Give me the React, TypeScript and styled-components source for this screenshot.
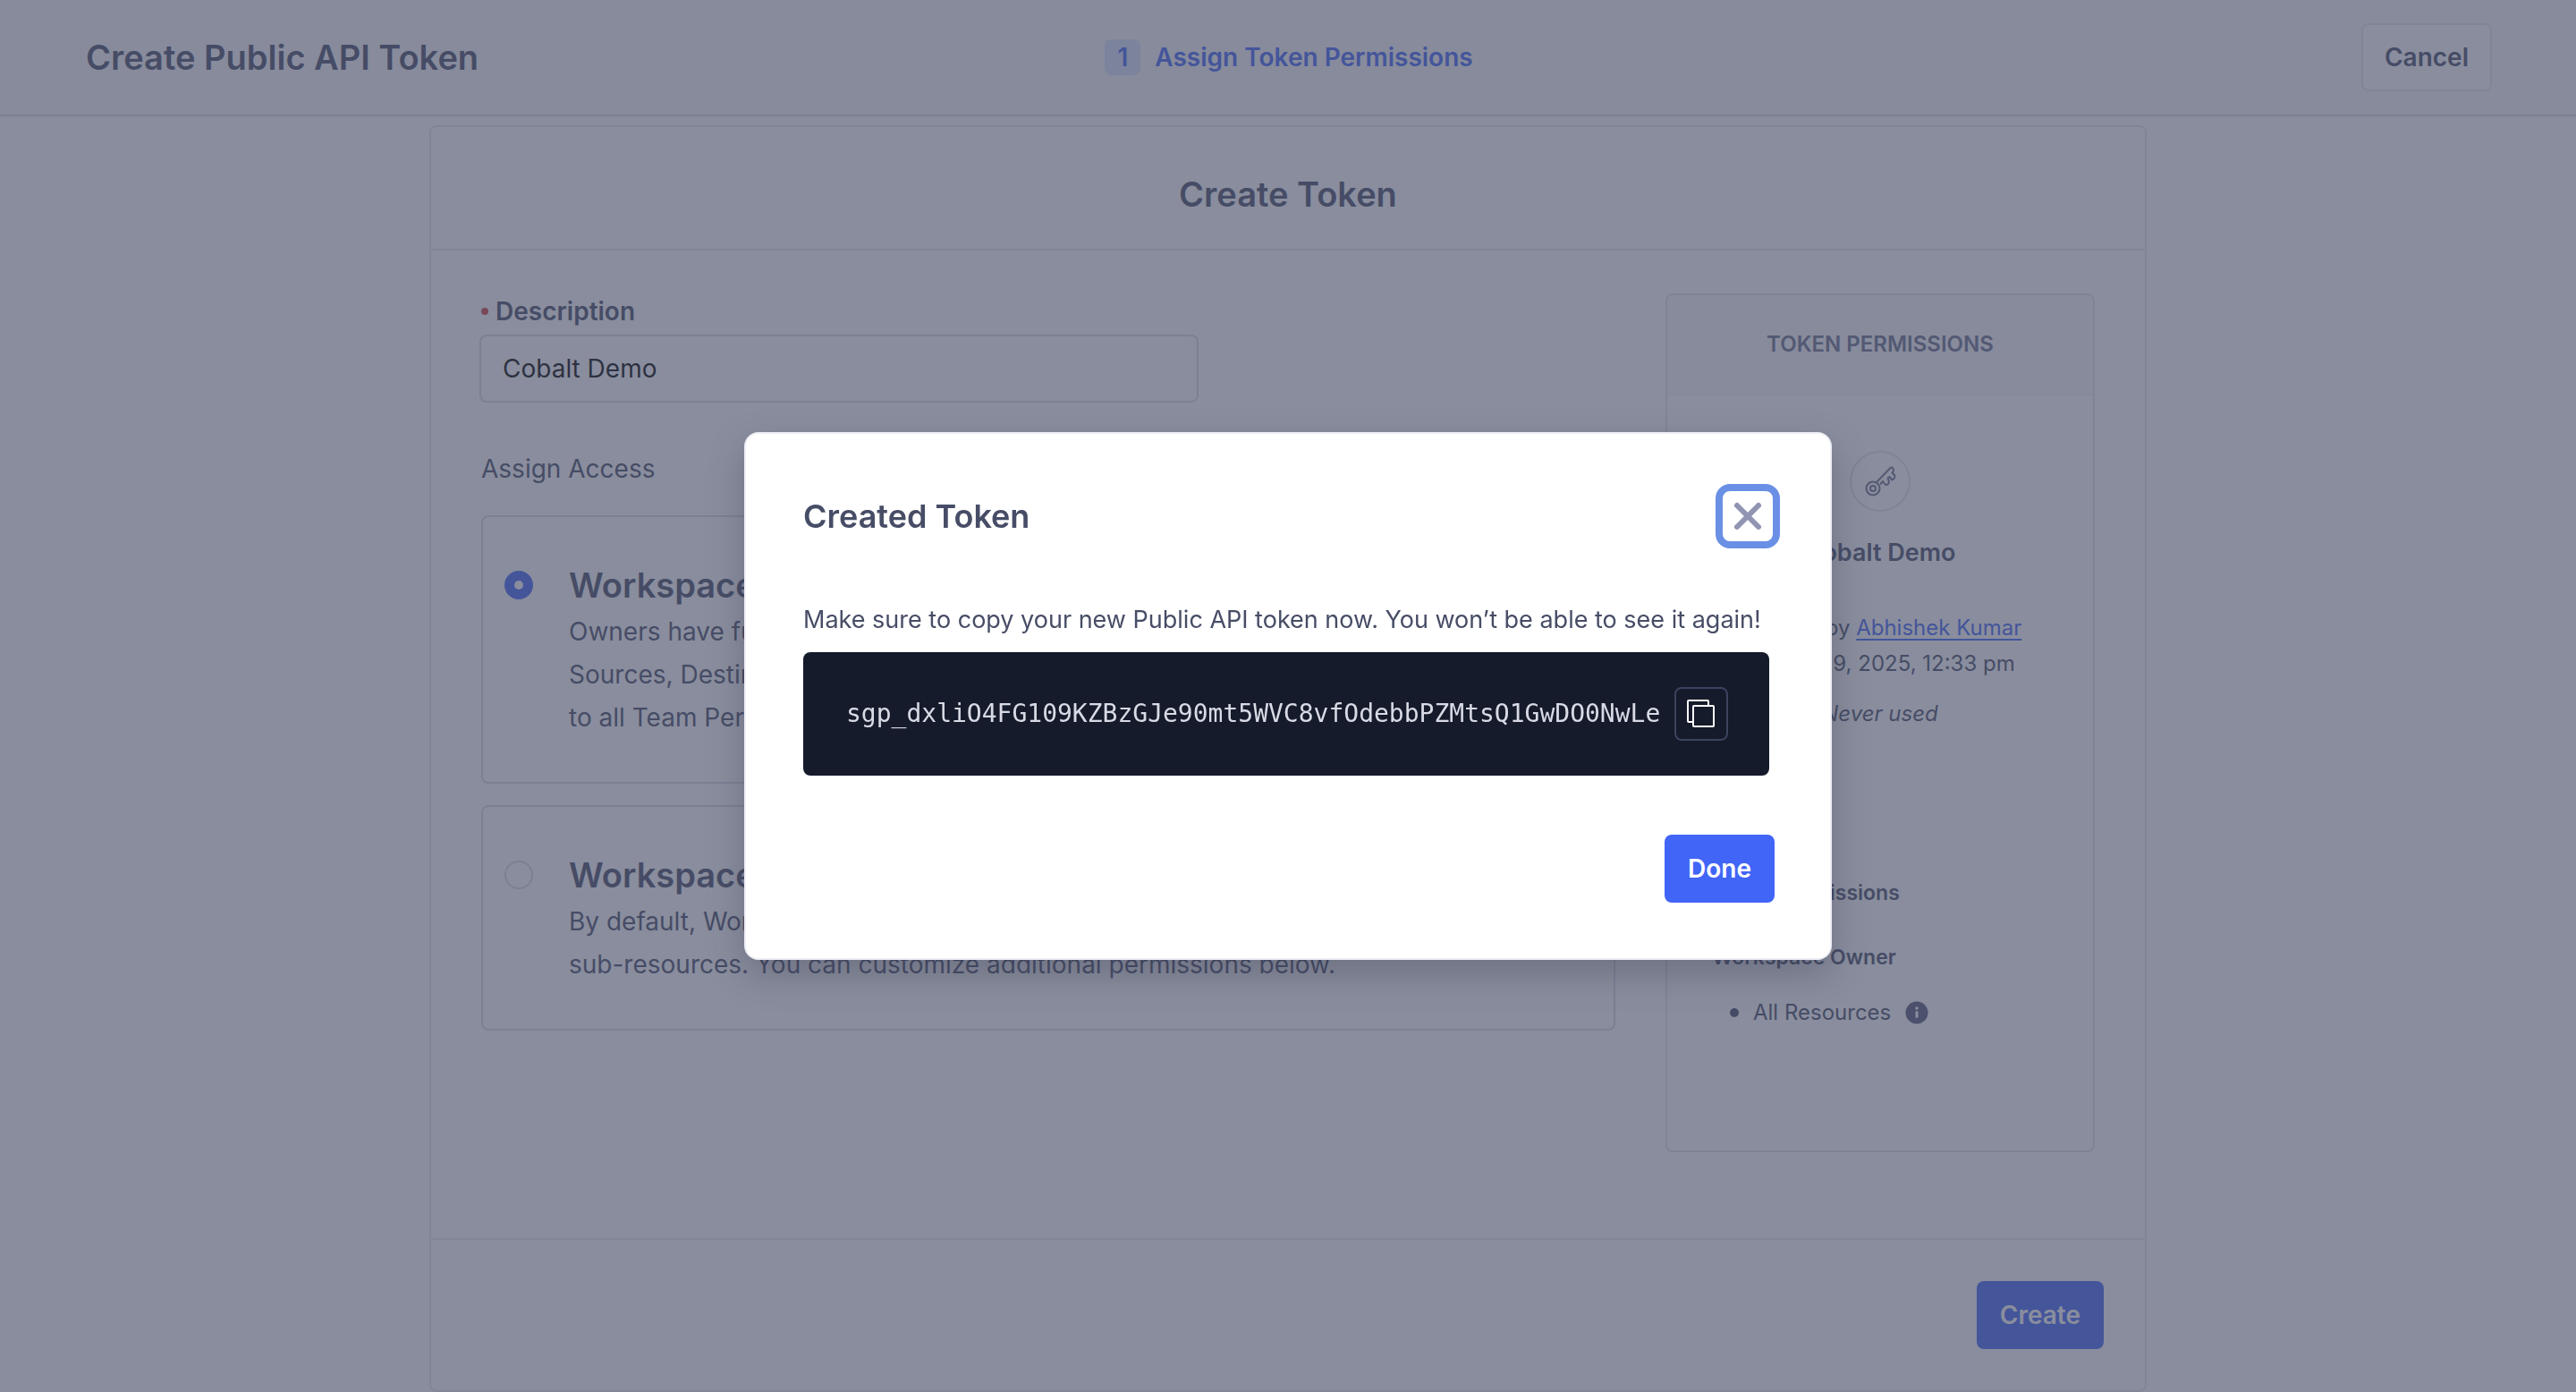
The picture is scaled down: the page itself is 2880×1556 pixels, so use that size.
import React from "react";
import styled, { createGlobalStyle } from "styled-components";

const sans = `Inter, "Liberation Sans", sans-serif`;
const mono = `"DejaVu Sans Mono", "Liberation Mono", monospace`;

const GlobalStyle = createGlobalStyle`
  *, *::before, *::after { box-sizing: border-box; }
  html, body { margin: 0; height: 100%; overflow: hidden; }
  body {
    background: #ffffff;
    color: #474d66;
    font-family: ${sans};
    font-size: 28px;
    line-height: 40px;
  }
  h1, h2, h3, h4, p, ul, dl { margin: 0; padding: 0; }
  button, input { font-family: inherit; }
`;

const Page = styled.div`
  min-height: 100vh;
`;

const TopBar = styled.header`
  display: grid;
  grid-template-columns: 1fr auto 1fr;
  align-items: center;
  height: 130px;
  padding: 0 94px 0 96px;
  background: #f9f9fd;
  border-bottom: 2px solid #d8dae5;
`;

const Heading = styled.h2<{ $compact?: boolean }>`
  font-size: ${(p) => (p.$compact ? 36 : 38)}px;
  line-height: 48px;
  font-weight: 600;
`;

const Steps = styled.nav`
  display: flex;
  align-items: center;
  gap: 16px;
  color: #4165f6;
  font-weight: 600;
`;

const StepNumber = styled.span`
  display: grid;
  place-items: center;
  width: 40px;
  height: 40px;
  border-radius: 8px;
  background: #dae2fd;
`;

const Button = styled.button<{ $primary?: boolean }>`
  height: 76px;
  padding: 0 ${(p) => (p.$primary ? 26 : 24)}px;
  border: ${(p) => (p.$primary ? "0" : "2px solid #e6e8f0")};
  border-radius: 8px;
  background: ${(p) => (p.$primary ? "#4165f6" : "#ffffff")};
  color: ${(p) => (p.$primary ? "#ffffff" : "#474d66")};
  font-size: 28px;
  font-weight: 600;
`;

const CancelSlot = styled.div`
  justify-self: end;
`;

const Card = styled.main`
  width: 1920px;
  max-width: calc(100% - 96px);
  margin: 10px auto 0;
  border: 2px solid #e6e8f0;
  border-radius: 8px;
`;

const CardHeader = styled.header`
  display: grid;
  place-items: center;
  height: 138px;
  padding-top: 14px;
  border-bottom: 2px solid #e6e8f0;
`;

const CardBody = styled.div`
  display: grid;
  grid-template-columns: minmax(0, 1fr) 480px;
  gap: 56px;
  padding: 48px 56px 96px 54px;
`;

const CardFooter = styled.footer`
  display: flex;
  justify-content: flex-end;
  padding: 46px;
  border-top: 2px solid #e6e8f0;
`;

const Form = styled.form`
  display: flex;
  flex-direction: column;
  align-items: flex-start;
`;

const FieldLabel = styled.label`
  display: flex;
  align-items: center;
  gap: 8px;
  padding-left: 2px;
  font-weight: 600;
`;

const Required = styled.span`
  width: 8px;
  height: 8px;
  border-radius: 50%;
  background: #d14343;
`;

const TextInput = styled.input`
  width: 804px;
  max-width: 100%;
  height: 76px;
  margin-top: 6px;
  padding: 0 24px;
  border: 2px solid #d8dae5;
  border-radius: 8px;
  background: #ffffff;
  color: #000000;
  font-size: 28px;
`;

const Roles = styled.fieldset`
  display: flex;
  flex-direction: column;
  gap: 24px;
  width: 100%;
  margin: 54px 0 0;
  padding: 0 0 0 2px;
  border: 0;
`;

const RolesLegend = styled.legend`
  padding: 0;
  margin-bottom: 32px;
`;

const RoleCard = styled.label`
  display: grid;
  grid-template-columns: 32px minmax(0, 1fr);
  gap: 40px;
  padding: 48px 24px;
  border: 2px solid #d8dae5;
  border-radius: 8px;
`;

const Radio = styled.input`
  appearance: none;
  width: 32px;
  height: 32px;
  margin: 12px 0 0;
  border: 2px solid #d8dae5;
  border-radius: 50%;
  background: #ffffff;

  &:checked {
    border: 11px solid #4165f6;
  }
`;

const RoleText = styled.span`
  display: block;
  font-size: 28px;
  line-height: 48px;
`;

const RoleName = styled.strong`
  display: block;
  font-size: 38px;
  font-weight: 600;
  line-height: 56px;
`;

const Summary = styled.aside`
  height: 960px;
  border: 2px solid #e0e2ec;
  border-radius: 8px;
  font-size: 24px;
`;

const SummaryTitle = styled.h3`
  display: grid;
  place-items: center;
  height: 112px;
  background: #f9f9fd;
  border-bottom: 2px solid #f4f5f9;
  border-radius: 6px 6px 0 0;
  color: #696f8c;
  font-size: 24px;
  font-weight: 600;
`;

const SummaryHead = styled.div`
  display: flex;
  flex-direction: column;
  align-items: center;
  padding-top: 62px;
  text-align: center;
`;

const KeyBadge = styled.span`
  display: grid;
  place-items: center;
  width: 68px;
  height: 68px;
  border: 2px solid #e0e2ec;
  border-radius: 50%;
  color: #696f8c;
`;

const TokenName = styled.h4`
  margin: 26px 0 44px;
  font-size: 27px;
  font-weight: 600;
`;

const Author = styled.a`
  color: #4165f6;
  text-decoration: underline;
  text-decoration-thickness: 2px;
  text-underline-offset: 4px;
`;

const LastUsed = styled.em`
  margin-top: 16px;
`;

const SummaryBody = styled.div`
  padding: 160px 50px 0;
`;

const SummaryLabel = styled.h4`
  margin-bottom: 22px;
  font-size: 23px;
  font-weight: 600;

  & + & {
    margin-top: 32px;
  }
`;

const ResourceList = styled.ul`
  list-style: none;
`;

const ResourceItem = styled.li`
  display: flex;
  align-items: center;
  gap: 16px;
  padding-left: 20px;
`;

const Bullet = styled.span`
  width: 10px;
  height: 10px;
  border-radius: 50%;
  background: #474d66;
`;

const Overlay = styled.div`
  position: fixed;
  inset: 0;
  display: grid;
  justify-items: center;
  align-items: start;
  padding-top: 483px;
  background: rgba(71, 77, 102, 0.64);
`;

const Dialog = styled.section`
  width: 1216px;
  padding: 56px 62px 62px 64px;
  border: 2px solid #edeff5;
  border-radius: 16px;
  background: #ffffff;
  box-shadow: 0 16px 40px rgba(46, 49, 68, 0.3);
`;

const DialogHeader = styled.header`
  display: flex;
  align-items: center;
  justify-content: space-between;
  margin-bottom: 60px;
`;

const DialogText = styled.p`
  font-size: 27px;
`;

const CloseButton = styled.button`
  display: grid;
  place-items: center;
  width: 72px;
  height: 72px;
  margin-right: -6px;
  padding: 0;
  border: 8px solid #6a90e6;
  border-radius: 16px;
  background: #ffffff;
  color: #8f95b2;
`;

const TokenBox = styled.div`
  display: flex;
  align-items: center;
  justify-content: space-between;
  height: 138px;
  margin: 16px 6px 66px 0;
  padding: 0 46px 0 48px;
  border-radius: 8px;
  background: #151b2b;
  color: #d8dae5;
`;

const Code = styled.code`
  font-family: ${mono};
  font-size: 28px;
`;

const CopyButton = styled.button`
  display: grid;
  place-items: center;
  width: 60px;
  height: 60px;
  padding: 0;
  border: 2px solid #3b435e;
  border-radius: 8px;
  background: transparent;
  color: #ffffff;
`;

const DialogFooter = styled.footer`
  display: flex;
  justify-content: flex-end;
`;

const KeyIcon = () => (
  <svg width="36" height="36" viewBox="0 0 36 36" fill="none" stroke="currentColor" strokeWidth="2" strokeLinejoin="round" aria-hidden="true">
    <path d="M14 19 L29 3.500 Q31 1.500 32.500 3.500 L33 6.500 L31.500 8.500 L34 11 Q35 13 33.500 15 L31.500 16.500 L28.500 13 L26.500 14.500 L28 18 Q28 20 26.500 21.500 L24 22 L21 18 L18 21.500" />
    <circle cx="10" cy="26" r="7.500" />
    <circle cx="10" cy="26" r="3" />
  </svg>
);

const CrossIcon = () => (
  <svg width="36" height="36" viewBox="0 0 36 36" fill="none" stroke="currentColor" strokeWidth="6" strokeLinecap="round" aria-hidden="true">
    <path d="M6 6 L30 30 M30 6 L6 30" />
  </svg>
);

const CopyIcon = () => (
  <svg width="32" height="32" viewBox="0 0 32 32" fill="none" stroke="currentColor" strokeWidth="2" strokeLinejoin="round" aria-hidden="true">
    <path d="M7 25 H2 Q1 25 1 24 V2 Q1 1 2 1 H23 Q24 1 24 2 V7" />
    <rect x="7" y="7" width="23" height="23" rx="1" />
  </svg>
);

const InfoIcon = () => (
  <svg width="26" height="26" viewBox="0 0 26 26" role="img" aria-label="Info">
    <circle cx="13" cy="13" r="12.500" fill="#53597a" />
    <circle cx="13" cy="8" r="1.700" fill="#fff" />
    <rect x="11.500" y="11" width="3" height="8" rx="1.500" fill="#fff" />
  </svg>
);

const roles = [
  {
    id: "owner",
    name: "Workspace Owner",
    text: ["Owners have full read and edit access to everything in the workspace, including", "Sources, Destinations, add-on products, and settings. Owners have full access", "to all Team Permissions."],
  },
  {
    id: "member",
    name: "Workspace Member",
    text: ["By default, Workspace Members do not have access to any resources or", "sub-resources. You can customize additional permissions below."],
  },
];

export default function App() {
  return (
    <>
      <GlobalStyle />
      <Page>
        <TopBar>
          <Heading as="h1">Create Public API Token</Heading>
          <Steps aria-label="Steps">
            <StepNumber>1</StepNumber>
            <span>Assign Token Permissions</span>
          </Steps>
          <CancelSlot>
            <Button type="button">Cancel</Button>
          </CancelSlot>
        </TopBar>

        <Card>
          <CardHeader>
            <Heading>Create Token</Heading>
          </CardHeader>
          <CardBody>
            <Form>
              <FieldLabel htmlFor="description">
                <Required />
                Description
              </FieldLabel>
              <TextInput id="description" type="text" defaultValue="Cobalt Demo" />
              <Roles>
                <RolesLegend>Assign Access</RolesLegend>
                {roles.map((role, index) => (
                  <RoleCard key={role.id} htmlFor={role.id}>
                    <Radio type="radio" name="role" id={role.id} defaultChecked={index === 0} />
                    <RoleText>
                      <RoleName>{role.name}</RoleName>
                      {role.text.map((line) => (
                        <React.Fragment key={line}>
                          {line}
                          <br />
                        </React.Fragment>
                      ))}
                    </RoleText>
                  </RoleCard>
                ))}
              </Roles>
            </Form>

            <Summary>
              <SummaryTitle>TOKEN PERMISSIONS</SummaryTitle>
              <SummaryHead>
                <KeyBadge>
                  <KeyIcon />
                </KeyBadge>
                <TokenName>Cobalt Demo</TokenName>
                <p>
                  Created by <Author href="#author">Abhishek Kumar</Author>
                </p>
                <p>on Jan 29, 2025, 12:33 pm</p>
                <LastUsed>Never used</LastUsed>
              </SummaryHead>
              <SummaryBody>
                <SummaryLabel>Token Permissions</SummaryLabel>
                <SummaryLabel>Workspace Owner</SummaryLabel>
                <ResourceList>
                  <ResourceItem>
                    <Bullet />
                    All Resources
                    <InfoIcon />
                  </ResourceItem>
                </ResourceList>
              </SummaryBody>
            </Summary>
          </CardBody>
          <CardFooter>
            <Button type="button" $primary>
              Create
            </Button>
          </CardFooter>
        </Card>
      </Page>

      <Overlay>
        <Dialog role="dialog" aria-modal="true" aria-labelledby="dialog-title">
          <DialogHeader>
            <Heading $compact id="dialog-title">
              Created Token
            </Heading>
            <CloseButton type="button" aria-label="Close">
              <CrossIcon />
            </CloseButton>
          </DialogHeader>
          <DialogText>Make sure to copy your new Public API token now. You won’t be able to see it again!</DialogText>
          <TokenBox>
            <Code>sgp_dxliO4FG109KZBzGJe90mt5WVC8vfOdebbPZMtsQ1GwDO0NwLe</Code>
            <CopyButton type="button" aria-label="Copy token">
              <CopyIcon />
            </CopyButton>
          </TokenBox>
          <DialogFooter>
            <Button type="button" $primary>
              Done
            </Button>
          </DialogFooter>
        </Dialog>
      </Overlay>
    </>
  );
}
